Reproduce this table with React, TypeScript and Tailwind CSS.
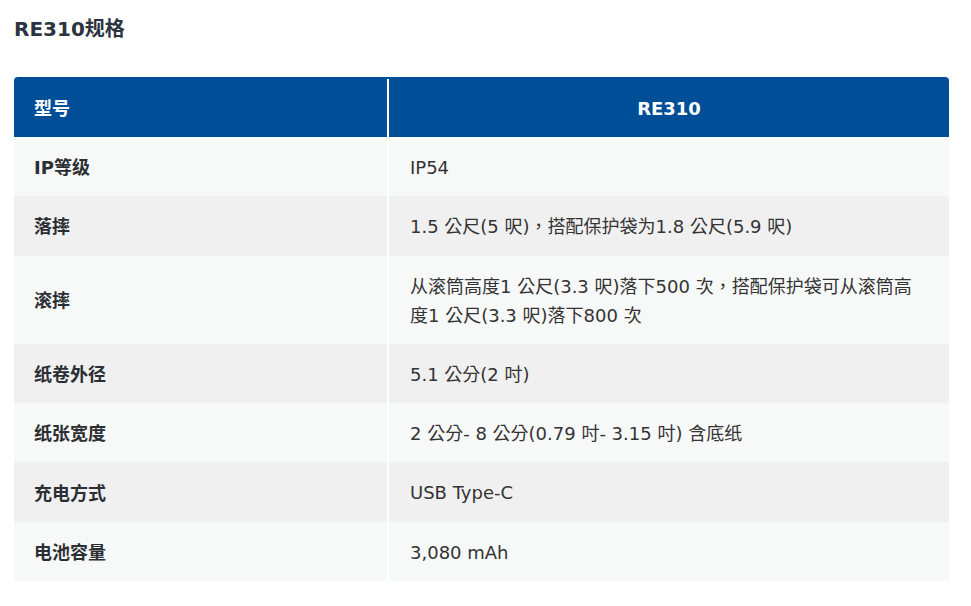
const specs: [string, string][] = [
  ['IP等级', 'IP54'],
  ['落摔', '1.5 公尺(5 呎)，搭配保护袋为1.8 公尺(5.9 呎)'],
  ['滚摔', '从滚筒高度1 公尺(3.3 呎)落下500 次，搭配保护袋可从滚筒高度1 公尺(3.3 呎)落下800 次'],
  ['纸卷外径', '5.1 公分(2 吋)'],
  ['纸张宽度', '2 公分- 8 公分(0.79 吋- 3.15 吋) 含底纸'],
  ['充电方式', 'USB Type-C'],
  ['电池容量', '3,080 mAh'],
];

const font = { fontFamily: '"DejaVu Sans", Verdana, "Noto Sans CJK TC", sans-serif' };

export default function App() {
  return (
    <div className="min-h-screen bg-white px-[14px] pt-[15px]" style={font}>
      <h2 className="text-[20px] font-bold leading-[28px] text-[#2b3440]">RE310规格</h2>

      <div className="mt-[34px] w-[935px]">
        {/* header */}
        <div className="flex h-[60px] overflow-hidden rounded-t-[4px] bg-[#004e98] pt-[2px] text-[18px] font-bold text-white">
          <div className="flex w-[375px] items-center border-r-2 border-white pl-[20px]">型号</div>
          <div className="flex flex-1 items-center justify-center">RE310</div>
        </div>

        {specs.map(([label, value], i) => (
          <div
            key={label}
            className={`flex leading-[29px] text-[#333] ${i % 2 === 0 ? 'bg-[#f7f8f8]' : 'bg-[#f0f0f0]'}`}
          >
            <div className="flex w-[375px] items-center border-r-2 border-white pb-[14px] pl-[20px] pt-[16px] text-[18px] font-bold text-[#2b2f33]">
              {label}
            </div>
            <div className="flex-1 pb-[14.3px] pl-[21px] pr-[22px] pt-[16px] text-[18px]">{value}</div>
          </div>
        ))}
      </div>
    </div>
  );
}
